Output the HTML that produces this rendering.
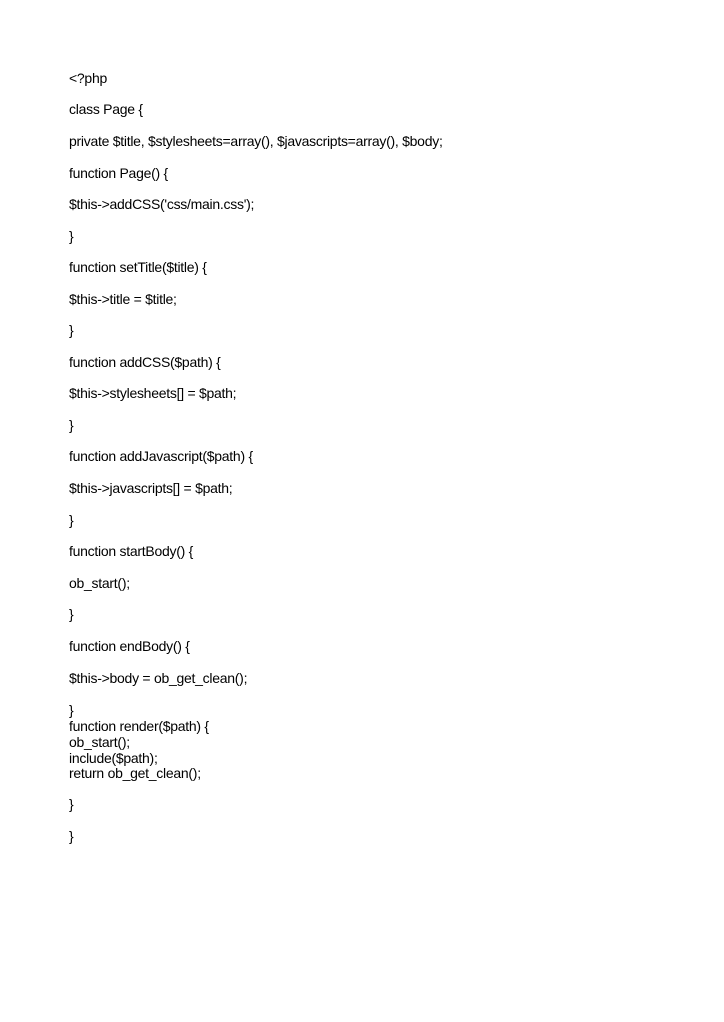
<!DOCTYPE html>
<html><head><meta charset="utf-8"><style>
body{margin:0;width:724px;height:1022px;background:#fff;position:relative;font-family:"Liberation Sans",Arial,sans-serif;font-size:14px;color:#000;letter-spacing:-0.27px}
div{position:absolute;left:69px;line-height:16px;white-space:pre}
</style></head><body>
<div style="top:70px">&lt;?php</div>
<div style="top:101px">class Page {</div>
<div style="top:133px">private $title, $stylesheets=array(), $javascripts=array(), $body;</div>
<div style="top:165px">function Page() {</div>
<div style="top:196px">$this-&gt;addCSS('css/main.css');</div>
<div style="top:228px">}</div>
<div style="top:259px">function setTitle($title) {</div>
<div style="top:291px">$this-&gt;title = $title;</div>
<div style="top:322px">}</div>
<div style="top:354px">function addCSS($path) {</div>
<div style="top:385px">$this-&gt;stylesheets[] = $path;</div>
<div style="top:417px">}</div>
<div style="top:448px">function addJavascript($path) {</div>
<div style="top:480px">$this-&gt;javascripts[] = $path;</div>
<div style="top:512px">}</div>
<div style="top:543px">function startBody() {</div>
<div style="top:575px">ob_start();</div>
<div style="top:606px">}</div>
<div style="top:638px">function endBody() {</div>
<div style="top:670px">$this-&gt;body = ob_get_clean();</div>
<div style="top:702px">}</div>
<div style="top:718px">function render($path) {</div>
<div style="top:734px">ob_start();</div>
<div style="top:750px">include($path);</div>
<div style="top:765px">return ob_get_clean();</div>
<div style="top:796px">}</div>
<div style="top:828px">}</div>
</body></html>
